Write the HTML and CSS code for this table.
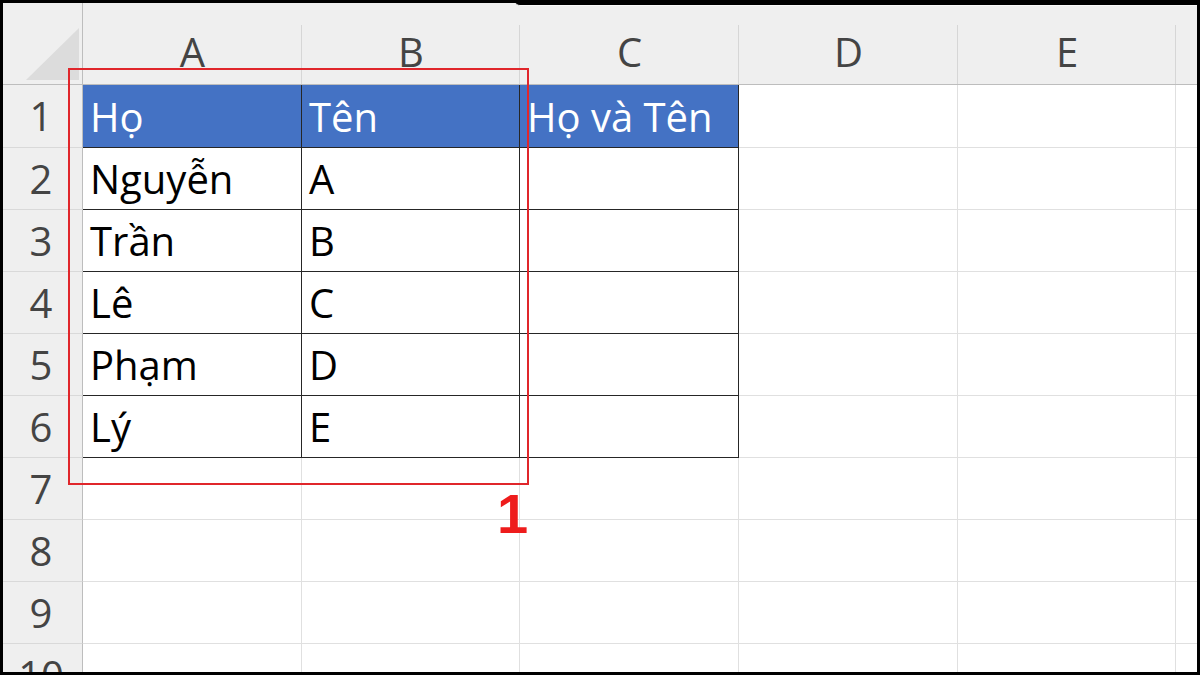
FILE: index.html
```html
<!DOCTYPE html>
<html lang="vi">
<head>
<meta charset="utf-8">
<title>Excel - Họ và Tên</title>
<link rel="stylesheet" href="styles.css">
</head>
<body>
<div class="frame">
  <div class="sheet">
    <div class="corner">
      <svg width="80" height="82" viewBox="0 0 80 82"><polygon points="23,77 76,77 76,25" fill="#dcdcdc"/></svg>
    </div>
    <div class="colh">A</div>
    <div class="colh">B</div>
    <div class="colh">C</div>
    <div class="colh">D</div>
    <div class="colh">E</div>
    <div class="colh last"></div>

    <div class="rowh">1</div>
    <div class="cell t head">Họ</div>
    <div class="cell t head">Tên</div>
    <div class="cell t head">Họ và Tên</div>
    <div class="cell"></div><div class="cell"></div><div class="cell last"></div>

    <div class="rowh">2</div>
    <div class="cell t">Nguyễn</div>
    <div class="cell t">A</div>
    <div class="cell t"></div>
    <div class="cell"></div><div class="cell"></div><div class="cell last"></div>

    <div class="rowh">3</div>
    <div class="cell t">Trần</div>
    <div class="cell t">B</div>
    <div class="cell t"></div>
    <div class="cell"></div><div class="cell"></div><div class="cell last"></div>

    <div class="rowh">4</div>
    <div class="cell t">Lê</div>
    <div class="cell t">C</div>
    <div class="cell t"></div>
    <div class="cell"></div><div class="cell"></div><div class="cell last"></div>

    <div class="rowh">5</div>
    <div class="cell t">Phạm</div>
    <div class="cell t">D</div>
    <div class="cell t"></div>
    <div class="cell"></div><div class="cell"></div><div class="cell last"></div>

    <div class="rowh">6</div>
    <div class="cell t">Lý</div>
    <div class="cell t">E</div>
    <div class="cell t"></div>
    <div class="cell"></div><div class="cell"></div><div class="cell last"></div>

    <div class="rowh">7</div>
    <div class="cell"></div><div class="cell"></div><div class="cell"></div>
    <div class="cell"></div><div class="cell"></div><div class="cell last"></div>

    <div class="rowh">8</div>
    <div class="cell"></div><div class="cell"></div><div class="cell"></div>
    <div class="cell"></div><div class="cell"></div><div class="cell last"></div>

    <div class="rowh">9</div>
    <div class="cell"></div><div class="cell"></div><div class="cell"></div>
    <div class="cell"></div><div class="cell"></div><div class="cell last"></div>

    <div class="rowh">10</div>
    <div class="cell"></div><div class="cell"></div><div class="cell"></div>
    <div class="cell"></div><div class="cell"></div><div class="cell last"></div>
  </div>

  <div class="tab-edge"></div>
  <div class="mark-box"></div>
  <div class="mark-label">1</div>
</div>
</body>
</html>
```

FILE: styles.css
```css
html, body {
  margin: 0;
  padding: 0;
  background: #000;
  overflow: hidden;
}

.frame {
  position: relative;
  margin: 3px;
  width: 1194px;
  height: 669px;
  overflow: hidden;
  background: #fff;
  font-family: "Open Sans", "Noto Sans", sans-serif;
}

.sheet {
  display: grid;
  grid-template-columns: 80px 219px 218px 219px 219px 218px 40px;
  grid-template-rows: 82px 63px repeat(9, 62px);
}

.corner {
  background: #efefef;
  border-right: 1px solid #bdbdbd;
  border-bottom: 1px solid #bdbdbd;
  box-sizing: border-box;
}

.corner svg {
  display: block;
}

.colh {
  box-sizing: border-box;
  background-color: #efefef;
  background-image: linear-gradient(#d6d6d6, #d6d6d6);
  background-repeat: no-repeat;
  background-position: right bottom;
  background-size: 1px calc(100% - 22px);
  border-bottom: 1px solid #bdbdbd;
  color: #444;
  font-size: 40px;
  line-height: 40px;
  padding-top: 29px;
  text-align: center;
}

.rowh {
  box-sizing: border-box;
  background: #efefef;
  border-right: 1px solid #bdbdbd;
  border-bottom: 1px solid #d9d9d9;
  color: #444;
  font-size: 40px;
  line-height: 40px;
  padding: 11px 3px 0 0;
  text-align: center;
}

.cell {
  box-sizing: border-box;
  border-right: 1px solid #e0e0e0;
  border-bottom: 1px solid #e0e0e0;
  color: #000;
  font-size: 40px;
  line-height: 40px;
  padding: 11px 0 0 7px;
  white-space: nowrap;
}

.cell.t {
  border-right-color: #262626;
  border-bottom-color: #262626;
}

.cell.head {
  background: #4472c4;
  color: #fff;
  padding-top: 12px;
}

.cell.last {
  border-right: none;
}

.tab-edge {
  position: absolute;
  top: -3px;
  left: 512px;
  right: 0;
  height: 5px;
  background: #000;
  border-bottom-left-radius: 5px;
  border-bottom: 1px solid #fafafa;
}

.mark-box {
  position: absolute;
  left: 65px;
  top: 65px;
  width: 461px;
  height: 417px;
  box-sizing: border-box;
  border: 2px solid #e0262b;
}

.mark-label {
  position: absolute;
  left: 494px;
  top: 483px;
  font-family: "Liberation Sans", Arial, sans-serif;
  font-weight: 700;
  font-size: 56px;
  line-height: 56px;
  color: #ee1c1c;
}
```
